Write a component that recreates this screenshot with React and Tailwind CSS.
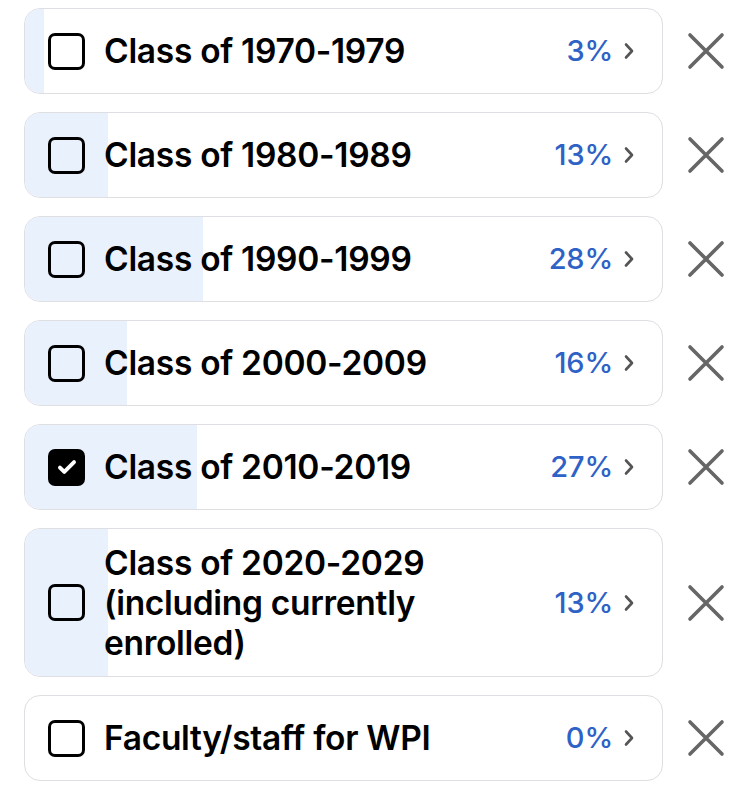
import React from "react";

const ROWS = [
  { label: "Class of 1970-1979", pct: 3 },
  { label: "Class of 1980-1989", pct: 13 },
  { label: "Class of 1990-1999", pct: 28 },
  { label: "Class of 2000-2009", pct: 16 },
  { label: "Class of 2010-2019", pct: 27, checked: true },
  { label: "Class of 2020-2029 (including currently enrolled)", pct: 13 },
  { label: "Faculty/staff for WPI", pct: 0 },
];

function Checkbox({ checked }) {
  if (checked) {
    return (
      <div className="w-[37px] h-[37px] shrink-0 rounded-[7px] bg-black flex items-center justify-center">
        <svg width="26" height="26" viewBox="0 0 24 24" fill="none">
          <path d="M5.5 12.5l4 4L18.5 7.5" stroke="white" strokeWidth="3.6" strokeLinecap="round" strokeLinejoin="round" />
        </svg>
      </div>
    );
  }
  return <div className="w-[37px] h-[37px] shrink-0 rounded-[7px] border-[3px] border-black" />;
}

function Row({ label, pct, checked }) {
  return (
    <div className="flex items-center">
      <div className="relative flex-1 ml-[24px] overflow-hidden rounded-[16px] border-[1.5px] border-[#dedee3] bg-white">
        <div className="absolute inset-y-0 left-0 bg-[#e9f1fd]" style={{ width: `${pct}%` }} />
        <div className="relative flex items-center min-h-[84px] py-[13.5px] pl-[23px] pr-[27px]">
          <Checkbox checked={checked} />
          <div className="flex-1 ml-[19px] mr-[20px] text-[33.5px] leading-[40px] font-semibold text-black tracking-[-0.3px]">
            {label}
          </div>
          <span className="text-[29px] font-medium text-[#2e62c6] tracking-[-0.2px]">{pct}%</span>
          <svg className="ml-[10px]" width="12" height="18" viewBox="0 0 12 18" fill="none">
            <path d="M3 2.5l6 6.5-6 6.5" stroke="#555" strokeWidth="2.6" strokeLinecap="round" strokeLinejoin="round" />
          </svg>
        </div>
      </div>
      <div className="w-[86px] shrink-0 flex items-center justify-center">
        <svg width="38" height="38" viewBox="0 0 38 38" fill="none">
          <path d="M3 3l32 32M35 3L3 35" stroke="#666" strokeWidth="3.6" strokeLinecap="round" />
        </svg>
      </div>
    </div>
  );
}

export default function App() {
  return (
    <div className="w-[749px] min-h-[790px] bg-white pt-[8px] flex flex-col gap-[18px]" style={{ fontFamily: "Inter, 'Noto Sans', sans-serif" }}>
      {ROWS.map((r) => (
        <Row key={r.label} {...r} />
      ))}
    </div>
  );
}
